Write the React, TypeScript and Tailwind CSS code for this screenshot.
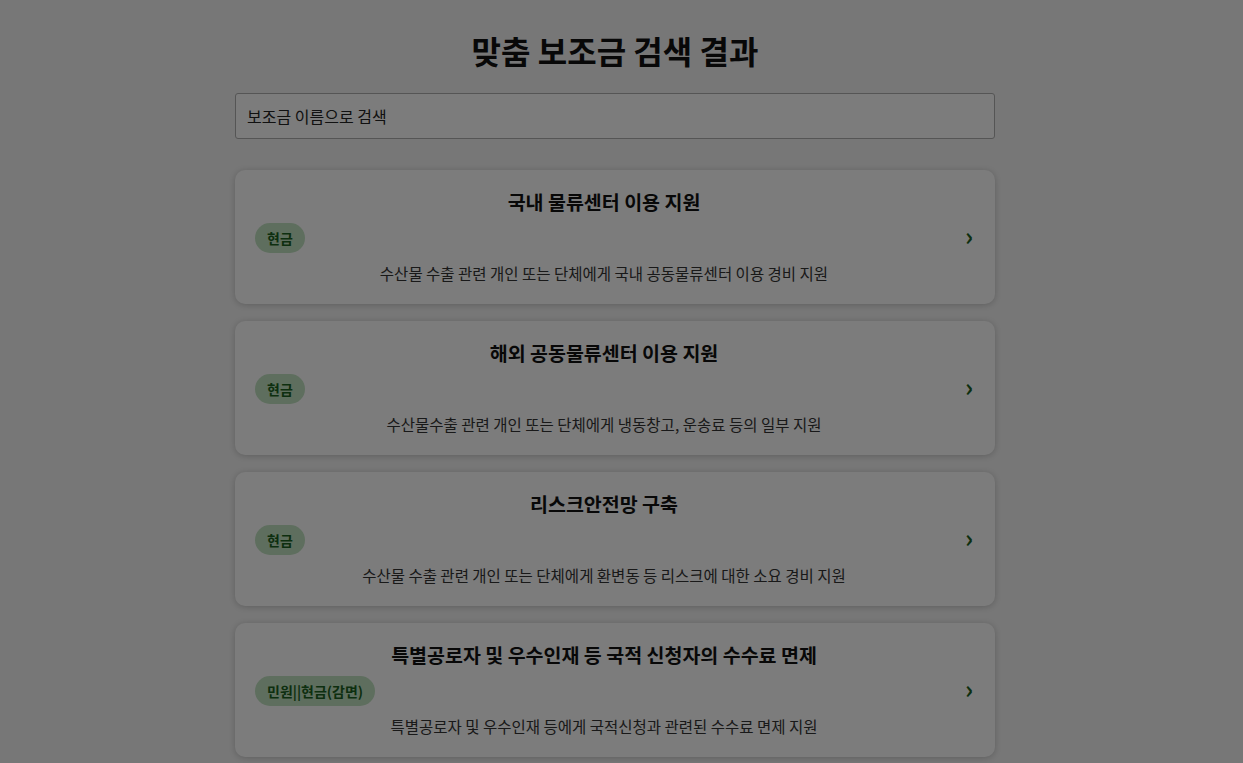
import { useState } from 'react';

interface Subsidy {
  id: number;
  title: string;
  tag: string;
  description: string;
}

const subsidies: Subsidy[] = [
  {
    id: 1,
    title: '국내 물류센터 이용 지원',
    tag: '현금',
    description: '수산물 수출 관련 개인 또는 단체에게 국내 공동물류센터 이용 경비 지원',
  },
  {
    id: 2,
    title: '해외 공동물류센터 이용 지원',
    tag: '현금',
    description: '수산물수출 관련 개인 또는 단체에게 냉동창고, 운송료 등의 일부 지원',
  },
  {
    id: 3,
    title: '리스크안전망 구축',
    tag: '현금',
    description: '수산물 수출 관련 개인 또는 단체에게 환변동 등 리스크에 대한 소요 경비 지원',
  },
  {
    id: 4,
    title: '특별공로자 및 우수인재 등 국적 신청자의 수수료 면제',
    tag: '민원||현금(감면)',
    description: '특별공로자 및 우수인재 등에게 국적신청과 관련된 수수료 면제 지원',
  },
];

function SubsidyCard({ item }: { item: Subsidy }) {
  return (
    <div className="flex items-center bg-[#f8f8f8] rounded-[10px] shadow-[0_1px_6px_rgba(0,0,0,0.2)] px-5 py-5 cursor-pointer">
      <div className="flex-1 min-w-0 flex flex-col">
        <h2 className="text-center text-[19.5px] leading-6 font-bold text-[#111]">{item.title}</h2>
        <div className="mt-[9px]">
          <span className="inline-block rounded-full bg-[#bcdcbc] px-3 py-[6px] text-[14px] leading-[18px] font-bold text-[#1b5e20]">
            {item.tag}
          </span>
        </div>
        <p className="mt-[9px] text-center text-[15.5px] leading-[22px] text-[#333]">{item.description}</p>
      </div>
      <span className="w-[22px] shrink-0 pr-[2px] text-right text-[25px] leading-none font-bold text-[#1b5e20] pb-1">›</span>
    </div>
  );
}

export default function App() {
  const [query, setQuery] = useState('');

  const filtered = subsidies.filter(s => s.title.includes(query));

  return (
    <div
      className="min-h-screen bg-[#eeeeee] pr-[13px]"
      style={{ fontFamily: '"Noto Sans CJK KR", "Noto Sans", sans-serif' }}
    >
      <div className="w-[760px] mx-auto pt-[26px] pb-10">
        <h1 className="text-center text-[32px] leading-[48px] font-bold text-[#111]">맞춤 보조금 검색 결과</h1>

        <input
          type="text"
          value={query}
          onChange={(e) => setQuery(e.target.value)}
          placeholder="보조금 이름으로 검색"
          className="mt-[19px] w-full h-[46px] px-[11px] border border-[#aaa] rounded-[3px] bg-[#f8f8f8] text-[16px] text-[#222] placeholder:text-[#222] outline-none"
        />

        <div className="mt-[31px] flex flex-col gap-[17px]">
          {filtered.map(item => (
            <SubsidyCard key={item.id} item={item} />
          ))}
        </div>
      </div>

      {/* modal backdrop */}
      <div className="fixed inset-0 bg-black/50" />
    </div>
  );
}
